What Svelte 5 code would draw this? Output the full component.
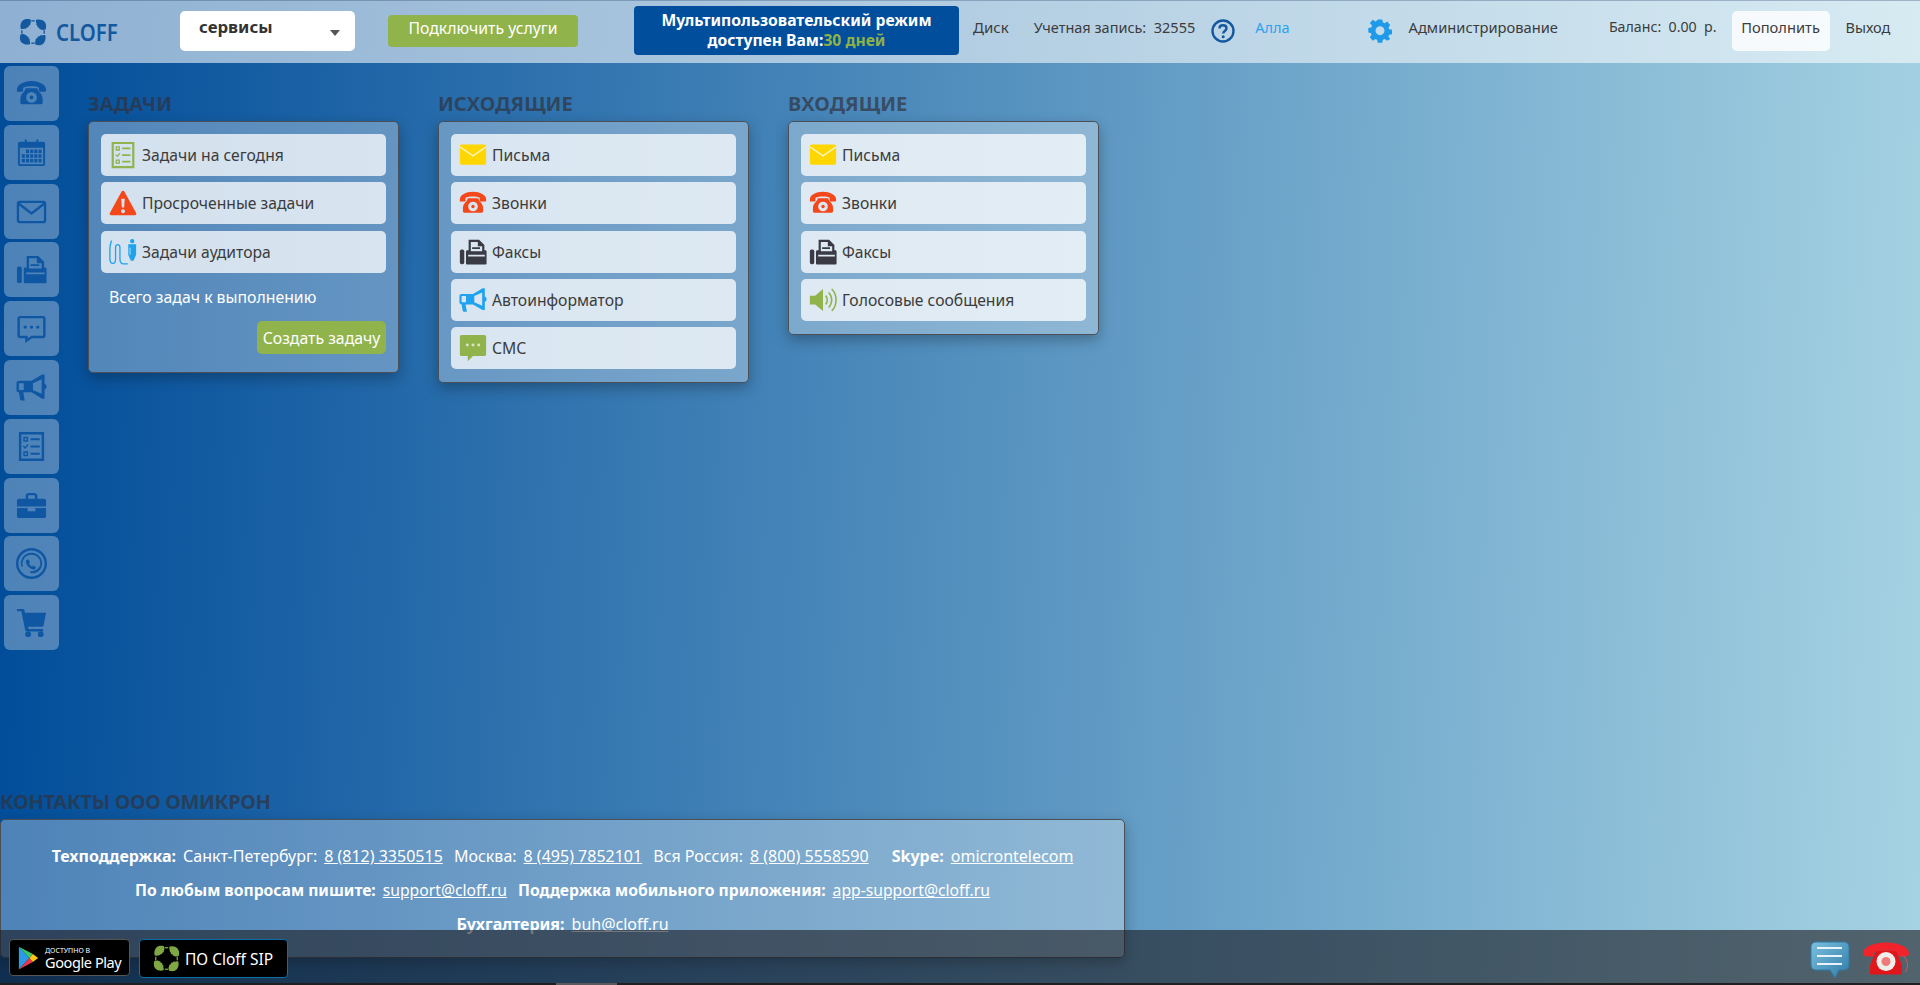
<script>
	const sideItems = ['phone', 'calendar', 'mail', 'fax', 'chat', 'horn', 'tasks', 'case', 'round', 'cart'];

	const columns = [
		{
			title: 'Задачи',
			rows: [
				{ icon: 'tasks', tone: 'green', label: 'Задачи на сегодня' },
				{ icon: 'warn', tone: 'red', label: 'Просроченные задачи' },
				{ icon: 'pen', tone: 'sky', label: 'Задачи аудитора' }
			],
			tasks: true
		},
		{
			title: 'Исходящие',
			rows: [
				{ icon: 'letter', tone: 'yellow', label: 'Письма' },
				{ icon: 'phone', tone: 'red', label: 'Звонки' },
				{ icon: 'fax', tone: 'dark', label: 'Факсы' },
				{ icon: 'horn', tone: 'sky', label: 'Автоинформатор' },
				{ icon: 'sms', tone: 'green', label: 'СМС' }
			]
		},
		{
			title: 'Входящие',
			rows: [
				{ icon: 'letter', tone: 'yellow', label: 'Письма' },
				{ icon: 'phone', tone: 'red', label: 'Звонки' },
				{ icon: 'fax', tone: 'dark', label: 'Факсы' },
				{ icon: 'voice', tone: 'green', label: 'Голосовые сообщения' }
			]
		}
	];
</script>

{#snippet icon(name)}
	<svg class="icon" viewBox="0 0 32 32" aria-hidden="true">
		{#if name === 'phone'}
			<path d="M1 11.500C1 7 8 3 16 3s15 4 15 8.500v1.500c0 .8-.5 1.200-1.200 1.200h-5c-.7 0-1.200-.4-1.200-1.200v-3C22.500 9 19 8.500 16 8.500S9.500 9 7.400 10v3c0 .8-.5 1.200-1.200 1.200h-5C.5 14.200 1 13.800 1 13z" />
			<path fill-rule="evenodd" d="M10 10.500h12c.4 2 1.500 3.500 3 5 1.500 1.700 2.500 4 2.500 6.500v3.500c0 1-.7 1.500-1.500 1.500H6c-.8 0-1.500-.5-1.500-1.500V22c0-2.500 1-4.800 2.500-6.500 1.500-1.500 2.600-3 3-5zM16 14.500a5.500 5.500 0 1 0 0 11 5.500 5.500 0 0 0 0-11zM16 18a2 2 0 1 1 0 4 2 2 0 0 1 0-4z" />
		{:else if name === 'calendar'}
			<path fill-rule="evenodd" d="M4 5h5V2.500h2V5h10V2.500h2V5h5c1 0 2 1 2 2v21c0 1-1 2-2 2H4c-1 0-2-1-2-2V7c0-1 1-2 2-2zm0 6v17h24V11z" />
			{#each [0, 1, 2] as r}
				{#each [0, 1, 2, 3, 4] as c}
					{#if !(r === 0 && c === 0)}
						<rect x={6 + c * 4.300} y={13 + r * 4.800} width="3.200" height="3.600" />
					{/if}
				{/each}
			{/each}
		{:else if name === 'mail'}
			<rect x="2" y="6" width="28" height="21" rx="2" fill="none" stroke="currentColor" stroke-width="2.400" />
			<path d="M3 8l13 10L29 8" fill="none" stroke="currentColor" stroke-width="2.400" />
		{:else if name === 'letter'}
			<rect x="1" y="4" width="30" height="23" rx="2" />
			<path d="M1.500 7L16 17 30.500 7" fill="none" stroke="#fff" stroke-width="1.500" opacity=".75" />
		{:else if name === 'fax'}
			<rect x="1" y="13" width="5" height="17" rx="2" />
			<path fill-rule="evenodd" d="M11 2h12l6 6v6h1c1 0 1.500.7 1.500 1.500V29c0 .7-.7 1.300-1.500 1.300H9.500C8.700 30.300 8 29.700 8 29V15.500C8 14.700 8.700 14 9.500 14H11zm2.500 2.500V15h13V9.500h-5v-5zM15 10.500h9v2h-9zM10.500 19v2h19v-2z" />
		{:else if name === 'chat'}
			<path fill-rule="evenodd" d="M4 3h24c1.500 0 2.500 1 2.500 2.500v18c0 1.500-1 2.500-2.500 2.500H16.500L9.500 31v-5H4c-1.500 0-2.500-1-2.500-2.500v-18C1.500 4 2.500 3 4 3zm0 2.500v18h8v2.500l4-2.500h12v-18z" />
			<circle cx="9.500" cy="14.500" r="1.700" /><circle cx="16" cy="14.500" r="1.700" /><circle cx="22.500" cy="14.500" r="1.700" />
		{:else if name === 'sms'}
			<path d="M3 1h26c1.200 0 2 .8 2 2v20c0 1.200-.8 2-2 2H16l-6 6v-6H3c-1.200 0-2-.8-2-2V3c0-1.200.8-2 2-2z" />
			<g fill="#d8e6c0"><circle cx="9.500" cy="12.500" r="1.700" /><circle cx="16" cy="12.500" r="1.700" /><circle cx="22.500" cy="12.500" r="1.700" /></g>
		{:else if name === 'horn'}
			<path fill-rule="evenodd" d="M27 2.500h2.500v9.500c1.300.5 2 1.700 2 3s-.7 2.500-2 3v9.500H27L16 21H7.500l1.500 8.500H6C5 29.500 4.500 29 4.200 28L3 21c-1.500 0-2.500-1-2.500-2.500v-7C.5 10 1.500 9 3 9h13zm-.5 5L17.500 11.500v7l9 4zM3 11.500v7h5v-7z" />
		{:else if name === 'tasks'}
			<path fill-rule="evenodd" d="M3 1h26v30H3zm2.500 2.500v25h21v-25z" />
			<path fill-rule="evenodd" d="M7.500 6h5v5h-5zm1.500 1.500v2h2v-2zM7.500 21h5v5h-5zm1.500 1.500v2h2v-2z" />
			<path d="M15 7.500h9.500v2H15zM15 15h9.500v2H15zM15 22.500h9.500v2H15z" />
			<path d="M7.500 15.500l2 2 3-3.500" fill="none" stroke="currentColor" stroke-width="1.400" />
		{:else if name === 'case'}
			<path fill-rule="evenodd" d="M10 6c0-1.500 1-3 3-3h6c2 0 3 1.500 3 3v3h7c1 0 2 1 2 2v6H1v-6c0-1 1-2 2-2h7zm2.500.5V9h7V6.500c0-.7-.3-1-1-1h-5c-.7 0-1 .3-1 1z" />
			<path d="M1 18.500h11V22h8v-3.500h11V27c0 1-1 2-2 2H3c-1 0-2-1-2-2z" />
		{:else if name === 'round'}
			<path fill-rule="evenodd" d="M16 0a16 16 0 1 1 0 32 16 16 0 0 1 0-32zm0 2.500a13.500 13.500 0 1 0 0 27 13.500 13.500 0 0 0 0-27z" />
			<path d="M16 5a11 11 0 0 1 11 11c0 1.500-.4 3-1 4.300-1 2.700-4 5-7.500 5.700-1.200.2-2.500 0-3.700-.5-.8-.3-.5-1.500.5-1.500 4.500.2 8.700-2.500 9.700-7 .5-3.500-1-7-4.500-9C17 6.500 14 6.500 11.500 8 8 10 6 14 7 18.500c.2.800-1 1.300-1.500.5C3.500 13 8 5 16 5z" />
			<path d="M12.500 11.500l2 3-1 1.300c.5 1.700 1.500 2.700 3 3.300l1.300-1 3 2c-.7 1.700-2 2.400-3.500 2-3.500-1-6.300-3.800-7-7.300-.3-1.600.5-3 2.200-3.300z" />
		{:else if name === 'cart'}
			<path d="M1 2h6c.8 0 1.500.5 1.700 1.300l.6 2.700H31l-2.500 13c-.2.800-.8 1.300-1.500 1.300H12.500l.5 2.500h15v2.500H11c-.7 0-1.300-.5-1.500-1.200L5.500 4.500H1z" />
			<circle cx="12.500" cy="28" r="3" /><circle cx="25.500" cy="28" r="3" />
		{:else if name === 'warn'}
			<path fill-rule="evenodd" d="M16 2c.8 0 1.300.4 1.700 1L31 27.500c.7 1.400 0 2.500-1.500 2.500h-27C1 30 .3 28.900 1 27.500L14.300 3c.4-.6.9-1 1.700-1zm-2 9l.7 10h2.600l.7-10zm2 12a2.300 2.300 0 1 0 0 4.600 2.300 2.300 0 0 0 0-4.600z" />
		{:else if name === 'pen'}
			<path d="M3 3c-1.500 3-2 7-2 12v8c0 4 1.500 6 3.500 6s3-2 3-5V11c0-2 .8-3.500 2.500-3.500s2.500 1.500 2.500 3.500v13c0 3 1.500 5.500 4 5.500h5" fill="none" stroke="currentColor" stroke-width="1.500" />
			<circle cx="26.500" cy="3.500" r="2.500" />
			<path d="M22 7h9v12l-3 7h-3l-3-7z" />
			<path d="M24 11v8" fill="none" stroke="#d5e1ee" stroke-width="1" />
		{:else if name === 'voice'}
			<path d="M1 11h6l9-7.500v25L7 21H1z" />
			<path d="M19 11c2.500 2.500 2.500 7.500 0 10M22.500 7.500c4.500 4.500 4.500 12.500 0 17M26 3.500c6.500 6.500 6.500 18.500 0 25" fill="none" stroke="currentColor" stroke-width="1.800" />
		{/if}
	</svg>
{/snippet}

{#snippet clover()}
	<svg class="clover" viewBox="0 0 32 32" aria-hidden="true">
		{#each [0, 90, 180, 270] as turn}
			<g transform="rotate({turn} 16 16)">
				<path d="M13 1.500C9 .5 6 1 4 3S1 8.500 2 12.500c1.800.3 3 .3 4-.5 1 .8 2.200.3 2.500-1 1.300.5 2.500-.3 2.300-1.800 1.300 0 2.200-1 2.200-2.500 1-1.500.5-3.700 0-5.200z" />
				<path d="M14 2.500h4v1.500h-4z" />
			</g>
		{/each}
	</svg>
{/snippet}

<div class="page">
	<header class="top">
		<div class="logo">
			{@render clover()}
			<span class="logo-name">CLOFF</span>
		</div>
		<div class="services"><b>сервисы</b><i class="caret"></i></div>
		<button type="button" class="connect">Подключить услуги</button>
		<div class="promo">Мультипользовательский режим<br />доступен Вам:<em>30 дней</em></div>
		<span class="disk">Диск</span>
		<span class="account">Учетная запись:&nbsp; 32555</span>
		<svg class="help" viewBox="0 0 24 24" aria-hidden="true">
			<circle cx="12" cy="12" r="10.500" fill="none" stroke="currentColor" stroke-width="2.400" />
			<path d="M8.500 9.500C8.500 7.500 10 6.300 12 6.300s3.500 1.200 3.500 3c0 2.700-3.300 2.700-3.300 5.200" fill="none" stroke="currentColor" stroke-width="2.400" />
			<circle cx="12.200" cy="17.700" r="1.500" fill="currentColor" />
		</svg>
		<span class="user">Алла</span>
		<svg class="gear" viewBox="0 0 24 24" aria-hidden="true">
			<path fill-rule="evenodd" d="M9.500 0h5l.7 3.300 2 .9L20 2.400l3.300 3.700-1.900 2.800.8 2 3.300.6v5l-3.300.6-.8 2 1.900 2.800L20 23.600l-2.800-1.800-2 .9-.7 3.300h-5l-.7-3.300-2-.9L4 23.600.7 19.900l1.900-2.800-.8-2L-1 14.500v-5l3.300-.6.8-2L.7 4.100 4 .4l2.800 1.800 2-.9zM12 7.500a5 5 0 1 0 0 10 5 5 0 0 0 0-10z" transform="translate(1.200 .4) scale(.9)" />
		</svg>
		<span class="admin">Администрирование</span>
		<span class="balance">Баланс:&nbsp; 0.00&nbsp; р.</span>
		<button type="button" class="topup">Пополнить</button>
		<span class="exit">Выход</span>
	</header>

	<div class="middle">
		<nav class="side">
			{#each sideItems as item}
				<a href="#{item}" class="side-item" aria-label={item}>{@render icon(item)}</a>
			{/each}
		</nav>
		<main class="columns">
			{#each columns as col}
				<section class="col">
					<h2>{col.title}</h2>
					<div class="panel">
						{#each col.rows as row}
							<div class="row {row.tone}">
								{@render icon(row.icon)}
								<span>{row.label}</span>
							</div>
						{/each}
						{#if col.tasks}
							<p class="total">Всего задач к выполнению</p>
							<button type="button" class="create">Создать задачу</button>
						{/if}
					</div>
				</section>
			{/each}
		</main>
	</div>

	<section class="contacts">
		<h2>Контакты ООО Омикрон</h2>
		<div class="contact-panel">
			<p>
				<b>Техподдержка:</b><span>Санкт-Петербург:</span><a href="#spb">8 (812) 3350515</a>
				<span class="city">Москва:</span><a href="#msk">8 (495) 7852101</a>
				<span class="city">Вся Россия:</span><a href="#ru">8 (800) 5558590</a>
				<b class="skype">Skype:</b><a href="#skype">omicrontelecom</a>
			</p>
			<p class="narrow">
				<b>По любым вопросам пишите:</b><a href="#support">support@cloff.ru</a>
				<b class="city">Поддержка мобильного приложения:</b><a href="#app">app-support@cloff.ru</a>
			</p>
			<p><b>Бухгалтерия:</b><a href="#buh">buh@cloff.ru</a></p>
		</div>
	</section>

	<footer class="bar">
		<a href="#play" class="store play">
			<svg class="gp" viewBox="0 0 24 28" aria-hidden="true">
				<path d="M1 1l12 13L1 27z" fill="#2b9be8" />
				<path d="M1 1l16 8.500-4 4.500z" fill="#3fc66a" />
				<path d="M1 27l16-8.500-4-4.500z" fill="#e8384a" />
				<path d="M17 9.500L23 14l-6 4.500-4-4.500z" fill="#fcc514" />
			</svg>
			<span class="play-text"><small>ДОСТУПНО В</small>Google Play</span>
		</a>
		<a href="#sip" class="store sip">
			<span class="sip-logo">{@render clover()}</span>
			<span>ПО Cloff SIP</span>
		</a>
		<div class="bar-right">
			<svg class="bubble" viewBox="0 0 40 38" aria-hidden="true">
				<defs>
					<linearGradient id="bubble-fill" x1="0" y1="0" x2="1" y2="1">
						<stop offset="0" stop-color="#7cc0e0" />
						<stop offset="1" stop-color="#2f7aa6" />
					</linearGradient>
				</defs>
				<path d="M6 1h28c3 0 5 2 5 5v18c0 3-2 5-5 5h-5l-4 8-5-8H6c-3 0-5-2-5-5V6c0-3 2-5 5-5z" fill="url(#bubble-fill)" stroke="#2f7aa6" />
				<path d="M7 7h25M7 15h25M7 23h25" stroke="#e8f4fa" stroke-width="2.200" />
			</svg>
			<svg class="red-phone" viewBox="0 0 48 34" aria-hidden="true">
				<path d="M14 9h20l6 15v9H8v-9z" fill="#e0161d" />
				<path d="M1 12C1 6 10 1 24 1s23 5 23 11c0 2-2 3-4 3h-5c-2 0-2-1-2-3 0-2-5-3-12-3s-12 1-12 3c0 2 0 3-2 3H5c-2 0-4-1-4-3z" fill="#f0242a" />
				<circle cx="24" cy="20" r="9.500" fill="#f0eeea" />
				<circle cx="24" cy="20" r="4.500" fill="#ee7a7a" />
				<path d="M41 14c5 4 6 12 2 17" fill="none" stroke="#d9545a" />
			</svg>
		</div>
		<div class="strip"><i></i></div>
	</footer>
</div>

<style>
	:global(body) {
		margin: 0;
		overflow: hidden;
	}

	.page {
		position: relative;
		display: flex;
		flex-direction: column;
		height: 985px;
		overflow: hidden;
		background: linear-gradient(92deg, #004c99 0%, #a6d3e3 100%);
		font-family: 'Noto Sans', 'Open Sans', sans-serif;
		font-size: 14.500px;
		color: #3c3c3c;
	}

	a {
		color: inherit;
	}

	button {
		border: 0;
		font: inherit;
	}

	.icon {
		display: block;
		fill: currentColor;
	}

	/* top bar */
	.top {
		display: flex;
		align-items: center;
		flex: none;
		box-sizing: border-box;
		height: 63px;
		padding-bottom: 3px;
		border-top: 1px solid rgba(30, 60, 100, 0.3);
		background: rgba(255, 255, 255, 0.56);
		white-space: nowrap;
	}

	.logo {
		display: flex;
		align-items: center;
		margin-left: 19px;
		margin-top: 3px;
		width: 161px;
		color: #14589f;
	}

	.logo .clover {
		width: 28px;
		height: 28px;
		fill: currentColor;
	}

	.logo-name {
		margin-left: 9px;
		font-size: 24px;
		font-weight: 600;
		line-height: 28px;
		transform: scaleX(0.85);
		transform-origin: left;
	}

	.services {
		position: relative;
		box-sizing: border-box;
		width: 175px;
		height: 40px;
		padding: 4px 0 0 19px;
		border-radius: 5px;
		background: #fff;
		font-size: 16.800px;
		color: #333;
	}

	.caret {
		position: absolute;
		right: 15px;
		top: 19px;
		border: 5.500px solid transparent;
		border-top: 6px solid #555;
		border-bottom: 0;
	}

	.connect {
		width: 190px;
		height: 32px;
		margin-left: 33px;
		padding: 0 0 5px;
		border-radius: 4px;
		background: #91b34c;
		color: #fff;
		font-size: 15.800px;
	}

	.promo {
		box-sizing: border-box;
		width: 325px;
		height: 49px;
		margin-left: 56px;
		padding-top: 4px;
		border-radius: 4px;
		background: #004e9c;
		color: #fff;
		font-size: 15.700px;
		font-weight: 700;
		line-height: 20px;
		text-align: center;
	}

	.promo em {
		color: #8fb14a;
		font-style: normal;
	}

	.disk,
	.account,
	.user,
	.admin,
	.balance,
	.exit {
		margin-bottom: 8px;
	}

	.disk {
		margin-left: 14px;
		font-size: 15px;
	}

	.account {
		margin-left: 25px;
	}

	.help {
		width: 24px;
		height: 24px;
		margin-left: 16px;
		color: #14589f;
	}

	.user {
		margin-left: 20px;
		color: #2aa3ee;
	}

	.gear {
		width: 24px;
		height: 24px;
		margin-left: 78px;
		fill: #1e9ae8;
	}

	.admin {
		margin-left: 17px;
		font-size: 14.700px;
	}

	.balance {
		margin-left: 51px;
		font-size: 14.200px;
	}

	.topup {
		width: 98px;
		height: 40px;
		margin-left: 15px;
		padding: 0 0 7px;
		border-radius: 5px;
		background: rgba(255, 255, 255, 0.8);
		color: #3c3c3c;
		font-size: 14.700px;
	}

	.exit {
		margin-left: 16px;
	}

	/* sidebar and columns */
	.middle {
		display: flex;
		flex: none;
		height: 732px;
	}

	.side {
		display: flex;
		flex-direction: column;
		gap: 3.800px;
		box-sizing: border-box;
		width: 88px;
		padding: 3px 0 0 4px;
	}

	.side-item {
		display: flex;
		align-items: center;
		justify-content: center;
		width: 55px;
		height: 55px;
		border-radius: 6px;
		background: rgba(255, 255, 255, 0.3);
		color: #0f57a3;
	}

	.side-item .icon {
		width: 31px;
		height: 31px;
	}

	.columns {
		display: flex;
		align-items: flex-start;
		gap: 39px;
	}

	.col {
		width: 311px;
	}

	h2 {
		margin: 0;
		font-size: 20px;
		font-weight: 700;
		line-height: 24px;
		text-transform: uppercase;
		color: rgba(48, 50, 60, 0.7);
	}

	.col h2 {
		margin-top: 29px;
		margin-bottom: 5px;
	}

	.panel {
		display: flex;
		flex-direction: column;
		gap: 6.250px;
		padding: 12px 12px 13px;
		border: 1px solid #4a4f58;
		border-radius: 5px;
		background: rgba(255, 255, 255, 0.3);
		box-shadow: 0 5px 14px rgba(0, 0, 0, 0.28);
	}

	.row {
		display: flex;
		align-items: center;
		gap: 5px;
		height: 42px;
		padding-left: 8px;
		border-radius: 5px;
		background: rgba(255, 255, 255, 0.75);
		font-size: 15.700px;
		color: #3c3c3c;
	}

	.row .icon {
		width: 28px;
		height: 28px;
		flex: none;
	}

	.green .icon {
		color: #91b34c;
	}

	.red .icon {
		color: #f4471a;
	}

	.sky .icon {
		color: #1fa3ee;
	}

	.yellow .icon {
		color: #ffd600;
	}

	.dark .icon {
		color: #3a3a44;
	}

	.total {
		margin: 8px 0 0 8px;
		color: #fff;
		font-size: 15.800px;
		line-height: 20px;
	}

	.create {
		align-self: flex-end;
		width: 129px;
		height: 33px;
		margin-top: 8px;
		margin-bottom: 5px;
		padding: 0;
		border-radius: 5px;
		background: #91b34c;
		color: #fff;
		font-size: 15.800px;
	}

	/* contacts */
	.contacts h2 {
		line-height: 22px;
		margin-top: -4px;
		letter-spacing: -0.3px;
	}

	.contact-panel {
		box-sizing: border-box;
		width: 1125px;
		height: 139px;
		margin-top: 6px;
		padding-top: 19px;
		border: 1px solid #4a4f58;
		border-radius: 5px;
		background: rgba(255, 255, 255, 0.3);
		box-shadow: 0 5px 14px rgba(0, 0, 0, 0.28);
		color: #fff;
		font-size: 16px;
		text-align: center;
	}

	.contact-panel p {
		margin: 0;
		line-height: 34px;
		white-space: nowrap;
	}

	.contact-panel .narrow {
		font-size: 15.700px;
	}

	.contact-panel b,
	.contact-panel span {
		margin-right: 7px;
	}

	.contact-panel .city {
		margin-left: 7px;
	}

	.contact-panel .skype {
		margin-left: 19px;
	}

	/* bottom bar */
	.bar {
		position: absolute;
		left: 0;
		right: 0;
		bottom: 0;
		display: flex;
		align-items: flex-start;
		gap: 9px;
		box-sizing: border-box;
		height: 55px;
		padding: 9px 10px 0 9px;
		background: rgba(25, 25, 30, 0.6);
	}

	.store {
		display: flex;
		align-items: center;
		box-sizing: border-box;
		border-radius: 4px;
		background: #000;
		color: #fff;
		text-decoration: none;
	}

	.play {
		width: 121px;
		height: 37px;
		padding-left: 8px;
		border: 1px solid #555;
	}

	.gp {
		width: 21px;
		height: 26px;
		flex: none;
	}

	.play-text {
		display: flex;
		flex-direction: column;
		margin-left: 6px;
		font-size: 14.500px;
		line-height: 15px;
		letter-spacing: -0.4px;
	}

	.play-text small {
		font-size: 7px;
		line-height: 9px;
		letter-spacing: 0;
	}

	.sip {
		width: 149px;
		height: 39px;
		padding-left: 13px;
		border: 1px solid #0b6ea8;
		font-size: 15.500px;
	}

	.sip-logo .clover {
		display: block;
		width: 27px;
		height: 27px;
		margin-right: 5px;
		fill: #7fa844;
	}

	.bar-right {
		display: flex;
		align-items: flex-start;
		gap: 12px;
		margin-left: auto;
		margin-top: 2px;
	}

	.bubble {
		width: 40px;
		height: 38px;
	}

	.red-phone {
		width: 48px;
		height: 35px;
	}

	.strip {
		position: absolute;
		left: 0;
		right: 0;
		bottom: 0;
		height: 2px;
		background: #1f1f22;
	}

	.strip i {
		display: block;
		width: 61px;
		height: 2px;
		margin-left: 556px;
		background: #5a5a5e;
	}
</style>
